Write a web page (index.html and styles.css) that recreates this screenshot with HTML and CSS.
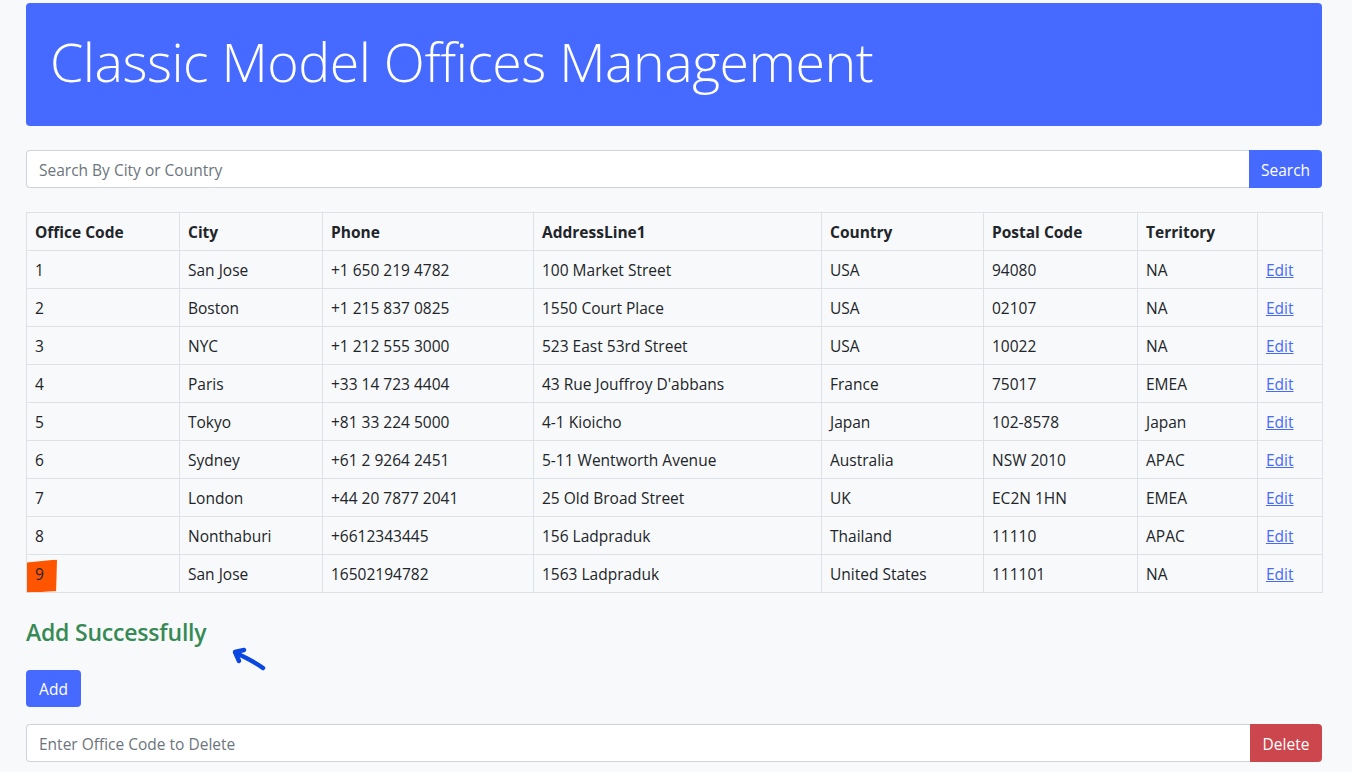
FILE: index.html
```html
<!DOCTYPE html>
<html lang="en">
<head>
<meta charset="utf-8">
<title>Classic Model Offices Management</title>
<link rel="stylesheet" href="styles.css">
</head>
<body>
<div class="container">
  <header class="jumbo">
    <h1 class="title">Classic Model Offices Management</h1>
  </header>

  <form class="input-group search">
    <input class="field" type="text" placeholder="Search By City or Country">
    <button class="btn btn-primary btn-attach" type="button">Search</button>
  </form>

  <table class="table">
    <colgroup>
      <col class="c1"><col class="c2"><col class="c3"><col class="c4"><col class="c5"><col class="c6"><col class="c7"><col class="c8">
    </colgroup>
    <thead>
      <tr><th>Office Code</th><th>City</th><th>Phone</th><th>AddressLine1</th><th>Country</th><th>Postal Code</th><th>Territory</th><th></th></tr>
    </thead>
    <tbody>
      <tr><td>1</td><td>San Jose</td><td>+1 650 219 4782</td><td>100 Market Street</td><td>USA</td><td>94080</td><td>NA</td><td><a href="#">Edit</a></td></tr>
      <tr><td>2</td><td>Boston</td><td>+1 215 837 0825</td><td>1550 Court Place</td><td>USA</td><td>02107</td><td>NA</td><td><a href="#">Edit</a></td></tr>
      <tr><td>3</td><td>NYC</td><td>+1 212 555 3000</td><td>523 East 53rd Street</td><td>USA</td><td>10022</td><td>NA</td><td><a href="#">Edit</a></td></tr>
      <tr><td>4</td><td>Paris</td><td>+33 14 723 4404</td><td>43 Rue Jouffroy D'abbans</td><td>France</td><td>75017</td><td>EMEA</td><td><a href="#">Edit</a></td></tr>
      <tr><td>5</td><td>Tokyo</td><td>+81 33 224 5000</td><td>4-1 Kioicho</td><td>Japan</td><td>102-8578</td><td>Japan</td><td><a href="#">Edit</a></td></tr>
      <tr><td>6</td><td>Sydney</td><td>+61 2 9264 2451</td><td>5-11 Wentworth Avenue</td><td>Australia</td><td>NSW 2010</td><td>APAC</td><td><a href="#">Edit</a></td></tr>
      <tr><td>7</td><td>London</td><td>+44 20 7877 2041</td><td>25 Old Broad Street</td><td>UK</td><td>EC2N 1HN</td><td>EMEA</td><td><a href="#">Edit</a></td></tr>
      <tr><td>8</td><td>Nonthaburi</td><td>+6612343445</td><td>156 Ladpraduk</td><td>Thailand</td><td>11110</td><td>APAC</td><td><a href="#">Edit</a></td></tr>
      <tr><td class="marked"><span class="mark"></span><span class="mark-text">9</span></td><td>San Jose</td><td>16502194782</td><td>1563 Ladpraduk</td><td>United States</td><td>111101</td><td>NA</td><td><a href="#">Edit</a></td></tr>
    </tbody>
  </table>

  <div class="status">
    <h3 class="success">Add Successfully</h3>
    <svg class="arrow" width="40" height="30" viewBox="0 0 40 30" aria-hidden="true">
      <path d="M34 24 C27 19 20 15 7 9" fill="none" stroke="#0a46e0" stroke-width="4.5" stroke-linecap="round"/>
      <path d="M15 6 L6 8 L10 17" fill="none" stroke="#0a46e0" stroke-width="4.5" stroke-linecap="round" stroke-linejoin="round"/>
    </svg>
  </div>

  <button class="btn btn-primary add" type="button">Add</button>

  <form class="input-group delete">
    <input class="field" type="text" placeholder="Enter Office Code to Delete">
    <button class="btn btn-danger btn-attach" type="button">Delete</button>
  </form>
</div>
</body>
</html>
```

FILE: styles.css
```css
* { box-sizing: border-box; }

body {
  margin: 0;
  background: #f8f9fa;
  font-family: "Open Sans", "Noto Sans", sans-serif;
  color: #212529;
  font-size: 15.5px;
}

.container {
  width: 1296px;
  margin: 0 0 0 26px;
  padding-top: 3px;
}

.jumbo {
  background: #466aff;
  border-radius: 4px;
  height: 123px;
  display: flex;
  align-items: center;
  padding: 0 24px;
}

.title {
  margin: 0;
  color: #fff;
  font-weight: 300;
  font-size: 53.7px;
  letter-spacing: -0.5px;
  line-height: 1;
  padding-bottom: 6px;
}

.input-group {
  display: flex;
  height: 38px;
}

.search { margin-top: 24px; }

.field {
  flex: 1;
  border: 1px solid #ced4da;
  border-right: none;
  border-radius: 4px 0 0 4px;
  background: #fff;
  font: inherit;
  font-size: 15.5px;
  padding: 1px 12px 0;
  color: #212529;
  outline: none;
}
.field::placeholder { color: #6c757d; }

.btn {
  border: none;
  color: #fff;
  font: inherit;
  font-size: 15.5px;
  border-radius: 4px;
  padding: 1px 12px 0;
  cursor: pointer;
}
.btn-attach { border-radius: 0 4px 4px 0; }
.btn-primary { background: #466aff; }
.btn-danger { background: #cc474d; }

.search .btn { width: 73px; }
.delete .btn { width: 72px; }

.table {
  margin-top: 24px;
  width: 100%;
  border-collapse: collapse;
  table-layout: fixed;
}
.c1 { width: 153px; }
.c2 { width: 143px; }
.c3 { width: 211px; }
.c4 { width: 288px; }
.c5 { width: 162px; }
.c6 { width: 154px; }
.c7 { width: 120px; }
.c8 { width: 65px; }

.table th, .table td {
  border: 1px solid #dee2e6;
  text-align: left;
  padding: 9px 8px 7px;
  line-height: 21px;
  height: 38px;
  font-size: 15.5px;
  white-space: nowrap;
}
.table th { font-weight: 700; }
.table a { color: #466aff; text-decoration: underline; }

.marked { position: relative; }
.mark {
  position: absolute;
  left: 0;
  top: 5px;
  width: 30px;
  height: 32px;
  background: #ff5500;
  transform: skewY(-2deg);
  clip-path: polygon(0 6%, 100% 0, 97% 100%, 0 100%);
}
.mark-text { position: relative; }

.status {
  position: relative;
  height: 77px;
  padding-top: 24px;
}
.success {
  margin: 0;
  color: #368a55;
  font-size: 23px;
  font-weight: 600;
  line-height: 30px;
  letter-spacing: -0.2px;
}
.arrow {
  position: absolute;
  left: 203px;
  top: 51px;
}

.add {
  height: 37px;
  width: 55px;
  display: block;
}

.delete { margin-top: 17px; }
```
